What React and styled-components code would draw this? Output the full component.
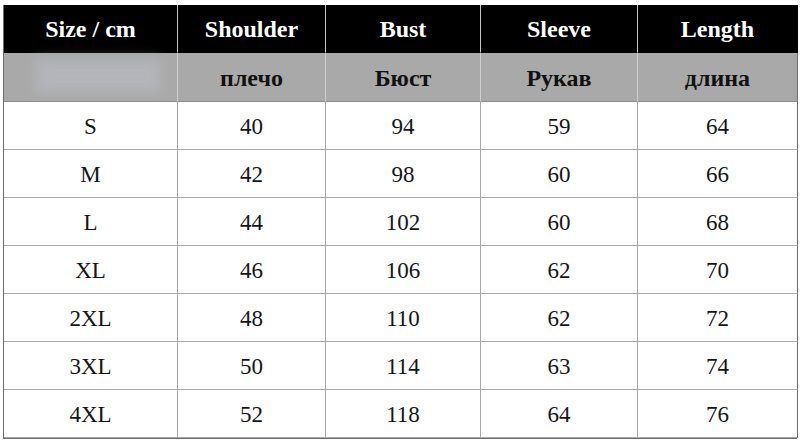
import React from 'react';
import styled, { createGlobalStyle } from 'styled-components';

const GlobalStyle = createGlobalStyle`
  html, body {
    margin: 0;
    padding: 0;
    background: #ffffff;
  }
`;

const Page = styled.div`
  width: 800px;
  height: 441px;
  padding: 5px 0 0 3px;
  box-sizing: border-box;
  background: #fff;
`;

const Grid = styled.div`
  display: grid;
  grid-template-columns: 174px 148px 155px 157px 160px;
  grid-template-rows: 48px 49px;
  grid-auto-rows: 48px;
  width: 794px;
  border-left: 1px solid #6e6e6e;
  border-bottom: 1px solid #6e6e6e;
  box-sizing: border-box;
`;

const Cell = styled.div`
  position: relative;
  display: flex;
  align-items: center;
  justify-content: center;
  box-sizing: border-box;
  font-family: "Liberation Serif", "Times New Roman", serif;
  font-size: 23px;
  color: #161616;
  background: #fff;
  border-right: 1px solid ${p => (p.$last ? '#6e6e6e' : '#a8a8a8')};
  border-bottom: 1px solid #a8a8a8;
  padding-top: 2px;
`;

const HeadCell = styled(Cell)`
  background: #000;
  color: #fff;
  font-weight: bold;
  font-size: 24px;
  border-right-color: ${p => (p.$last ? '#000' : '#c4c4c4')};
  border-bottom: 1px solid #000;
`;

const SubCell = styled(Cell)`
  background: #a9a9a9;
  color: #111;
  font-weight: bold;
  font-size: 24px;
  border-right-color: ${p => (p.$last ? '#6e6e6e' : '#cfcfcf')};
  border-bottom: 1px solid #8e8e8e;
`;

const Smudge = styled.div`
  position: absolute;
  left: 32px;
  top: 6px;
  width: 124px;
  height: 34px;
  background: #b6b9c0;
  filter: blur(6px);
  opacity: 0.75;
`;

const headers = ['Size / cm', 'Shoulder', 'Bust', 'Sleeve', 'Length'];
const subHeaders = ['', 'плечо', 'Бюст', 'Рукав', 'длина'];
const rows = [
  ['S', 40, 94, 59, 64],
  ['M', 42, 98, 60, 66],
  ['L', 44, 102, 60, 68],
  ['XL', 46, 106, 62, 70],
  ['2XL', 48, 110, 62, 72],
  ['3XL', 50, 114, 63, 74],
  ['4XL', 52, 118, 64, 76],
];

export default function App() {
  return (
    <Page>
      <GlobalStyle />
      <Grid>
        {headers.map((h, i) => (
          <HeadCell key={h} $last={i === headers.length - 1}>{h}</HeadCell>
        ))}
        {subHeaders.map((h, i) => (
          <SubCell key={'s' + i} $last={i === subHeaders.length - 1}>
            {i === 0 ? <Smudge /> : h}
          </SubCell>
        ))}
        {rows.map(row =>
          row.map((v, i) => (
            <Cell key={row[0] + i} $last={i === row.length - 1}>{v}</Cell>
          ))
        )}
      </Grid>
    </Page>
  );
}
